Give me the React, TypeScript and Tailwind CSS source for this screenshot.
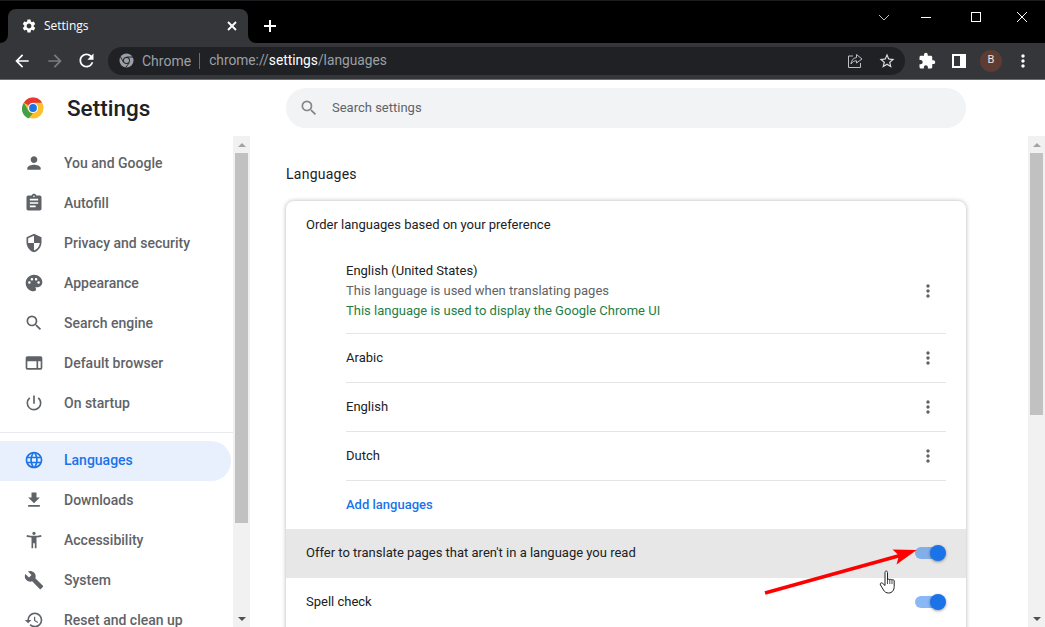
import type { ReactNode } from "react";
import {
	MdAccessibilityNew,
	MdArrowBack,
	MdArrowForward,
	MdAssignment,
	MdBuild,
	MdExtension,
	MdFileDownload,
	MdLanguage,
	MdMoreVert,
	MdOutlineStarBorder,
	MdPalette,
	MdPerson,
	MdPowerSettingsNew,
	MdRefresh,
	MdRestore,
	MdSearch,
	MdSecurity,
	MdSettings,
} from "react-icons/md";

const DefaultBrowserIcon = () => (
	<svg width="20" height="20" viewBox="0 0 24 24" fill="#5f6368">
		<path d="M4 4h16a2 2 0 0 1 2 2v12a2 2 0 0 1-2 2H4a2 2 0 0 1-2-2V6a2 2 0 0 1 2-2zm0 6v8h11v-8H4zm13 0v8h3v-8h-3z" />
	</svg>
);

const ChromeLogo = ({ size = 24 }: { size?: number }) => (
	<svg width={size} height={size} viewBox="0 0 48 48">
		<circle cx="24" cy="24" r="23" fill="#fbc02d" />
		<path d="M24 1a23 23 0 0 1 19.9 11.5H24a11.5 11.5 0 0 0-10 5.7L4.100 12.500A23 23 0 0 1 24 1z" fill="#e53935" />
		<path d="M4.100 12.500 14 29.800a11.500 11.500 0 0 0 10 5.700L14 47A23 23 0 0 1 4.100 12.500z" fill="#43a047" />
		<circle cx="24" cy="24" r="11" fill="#fff" />
		<circle cx="24" cy="24" r="8.500" fill="#1a73e8" />
	</svg>
);

const Toggle = ({ track }: { track: string }) => (
	<div className="relative flex h-4 w-[31px] items-center">
		<div className={`h-3 w-[29px] rounded-full ${track}`} />
		<div className="absolute right-0 top-0 h-4 w-4 rounded-full bg-[#1a73e8] shadow-[0_1px_3px_rgba(0,0,0,0.4)]" />
	</div>
);

const navTop = [
	{ label: "You and Google", icon: <MdPerson size={20} /> },
	{ label: "Autofill", icon: <MdAssignment size={20} /> },
	{ label: "Privacy and security", icon: <MdSecurity size={20} /> },
	{ label: "Appearance", icon: <MdPalette size={20} /> },
	{ label: "Search engine", icon: <MdSearch size={20} /> },
	{ label: "Default browser", icon: <DefaultBrowserIcon /> },
	{ label: "On startup", icon: <MdPowerSettingsNew size={20} /> },
];

const navBottom = [
	{ label: "Downloads", icon: <MdFileDownload size={20} /> },
	{ label: "Accessibility", icon: <MdAccessibilityNew size={20} /> },
	{ label: "System", icon: <MdBuild size={20} /> },
	{ label: "Reset and clean up", icon: <MdRestore size={20} /> },
];

const NavItem = ({ label, icon }: { label: string; icon: ReactNode }) => (
	<div className="flex h-10 shrink-0 items-center pl-[22px] text-sm font-medium text-[#5f6368]">
		<span className="mr-[18px] flex w-6 justify-center">{icon}</span>
		{label}
	</div>
);

const Scrollbar = ({ thumb }: { thumb: string }) => (
	<div className="flex w-[17px] shrink-0 flex-col items-center bg-[#f1f1f1]">
		<div className="flex h-[17px] w-full shrink-0 items-center justify-center">
			<div className="h-0 w-0 border-x-[4px] border-b-[4px] border-x-transparent border-b-[#a3a3a3]" />
		</div>
		<div className={`w-[13px] shrink-0 bg-[#c1c1c1] ${thumb}`} />
		<div className="flex-1" />
		<div className="flex h-[17px] w-full shrink-0 items-center justify-center">
			<div className="h-0 w-0 border-x-[4px] border-t-[4px] border-x-transparent border-t-[#505050]" />
		</div>
	</div>
);

const LangRow = ({ name }: { name: string }) => (
	<div className="flex h-[49px] items-center justify-between border-t border-[#e5e5e5]">
		<span>{name}</span>
		<MdMoreVert size={20} className="mr-[8px] text-[#5f6368]" />
	</div>
);

export default function App() {
	return (
		<div className="relative flex h-[627px] w-[1045px] flex-col overflow-hidden bg-white font-['Roboto',sans-serif] text-[13px] text-[#202124]">
			{/* tab strip */}
			<div className="flex h-[43px] shrink-0 items-end border-t border-[#1c1c1c] bg-black pl-2">
				<div className="relative flex h-[34px] w-[240px] items-center rounded-t-lg bg-[#35363a] pl-[13px] pr-[11px] font-['Open_Sans',sans-serif] text-xs text-white">
					<div className="absolute -left-2 bottom-0 h-2 w-2 bg-[#35363a]">
						<div className="h-2 w-2 rounded-br-lg bg-black" />
					</div>
					<div className="absolute -right-2 bottom-0 h-2 w-2 bg-[#35363a]">
						<div className="h-2 w-2 rounded-bl-lg bg-black" />
					</div>
					<MdSettings size={16} className="mr-[7px]" />
					<span className="flex-1">Settings</span>
					<svg width="10" height="10" viewBox="0 0 10 10" stroke="#fff" strokeWidth="1.800">
						<path d="M1 1l8 8M9 1l-8 8" />
					</svg>
				</div>
				<svg className="mb-[11px] ml-[16px]" width="12" height="12" viewBox="0 0 12 12" stroke="#fff" strokeWidth="2">
					<path d="M6 0v12M0 6h12" />
				</svg>
				<div className="mb-[21px] ml-auto flex items-center">
					<svg className="mr-[31px]" width="12" height="7" viewBox="0 0 12 7" fill="none" stroke="#bdbdbd">
						<path d="M1 1l5 5 5-5" />
					</svg>
					<div className="mr-[40px] h-px w-[10px] bg-white" />
					<div className="mr-[36px] h-[10px] w-[10px] border border-white" />
					<svg className="mr-[18px]" width="10" height="10" viewBox="0 0 10 10" stroke="#fff">
						<path d="M0 0l10 10M10 0L0 10" />
					</svg>
				</div>
			</div>

			{/* toolbar */}
			<div className="flex h-[37px] shrink-0 items-center border-b border-[#6e6e6e] bg-[#35363a] pb-[1px]">
				<div className="flex w-[108px] items-center text-white">
					<MdArrowBack size={20} className="ml-[12px]" />
					<MdArrowForward size={20} className="ml-[13px] text-[#7b7c7f]" />
					<MdRefresh size={21} className="ml-[11px]" />
				</div>
				<div className="flex h-7 w-[797px] items-center rounded-full bg-[#202124] pl-[11px] text-sm text-[#9aa0a6]">
					<svg width="15" height="15" viewBox="0 0 16 16" className="mr-[8px]">
						<circle cx="8" cy="8" r="7.500" fill="#9aa0a6" />
						<circle cx="8" cy="8" r="3.700" fill="#202124" />
						<circle cx="8" cy="8" r="2.700" fill="#9aa0a6" />
						<path d="M8 4.300h7M5 10.200L1.500 4M10.900 10.500L7 15.500" stroke="#202124" strokeWidth="1" />
					</svg>
					<span>Chrome</span>
					<span className="mx-2 h-4 w-px bg-[#6b6c70]" />
					<span className="ml-[1px] text-[13.75px]">
						chrome://<span className="text-white">settings</span>/languages
					</span>
					<svg className="ml-auto" width="16" height="16" viewBox="0 0 16 16" fill="none" stroke="#bdc1c6" strokeWidth="1">
						<path d="M6 3H1.500v11.500h12V10" />
						<path d="M9.500 1.500 15 6l-5.500 4V7.800C7 7.800 5.300 8.800 4 11c.3-3.600 2.200-6 5.500-6.400V1.500z" />
					</svg>
					<MdOutlineStarBorder size={18} className="ml-[15px] mr-[9px] text-[#dadce0]" />
				</div>
				<MdExtension size={18} className="ml-[13px] text-white" />
				<svg className="ml-[16px]" width="14" height="14" viewBox="0 0 14 14" fill="#fff">
					<path d="M0 0h14v14H0zm2 2v10h6V2z" fillRule="evenodd" />
				</svg>
				<div className="ml-[14px] flex h-[22px] w-[22px] items-center justify-center rounded-full bg-[#5d3d33] text-[11px] text-[#f1e3dd]">
					B
				</div>
				<MdMoreVert size={20} className="ml-[11px] text-white" />
			</div>

			{/* settings header */}
			<div className="flex h-[56px] shrink-0 items-center">
				<div className="flex w-[286px] items-center pl-[22px]">
					<ChromeLogo size={22} />
					<span className="ml-[23px] text-[22.500px] font-medium leading-none">Settings</span>
				</div>
				<div className="mb-[1px] flex h-10 w-[680px] items-center rounded-full bg-[#f1f3f4] pl-[13px] text-[#5f6368]">
					<MdSearch size={20} className="mr-[13px] text-[#80868b]" />
					Search settings
				</div>
			</div>

			{/* body */}
			<div className="flex min-h-0 flex-1">
				<div className="flex w-[233px] shrink-0 flex-col overflow-hidden pt-[7px]">
					{navTop.map((item) => (
						<NavItem key={item.label} {...item} />
					))}
					<div className="mt-[9px] h-px w-full shrink-0 bg-[#e8eaed]" />
					<div className="mb-[-1px] mt-2 flex h-10 w-[231px] shrink-0 items-center rounded-r-full bg-[#e8f0fe] pb-[2px] pl-[22px] text-sm font-medium text-[#1a73e8]">
						<span className="mr-[18px] flex w-6 justify-center">
							<MdLanguage size={20} />
						</span>
						Languages
					</div>
					{navBottom.map((item) => (
						<NavItem key={item.label} {...item} />
					))}
				</div>
				<Scrollbar thumb="h-[370px]" />

				<div className="min-w-0 flex-1 overflow-hidden pl-9">
					<div className="w-[680px]">
						<h2 className="flex h-[65px] items-start pt-[30px] text-[14px] leading-4 tracking-[0.25px]">Languages</h2>
						<div className="rounded-t-lg bg-white pb-10 shadow-[0_0_4px_rgba(60,64,67,0.4)]">
							<div className="flex h-12 items-center px-5">Order languages based on your preference</div>
							<div className="pl-[60px] pr-5">
								<div className="flex h-[84px] items-center justify-between">
									<div className="flex flex-col leading-5">
										<span>English (United States)</span>
										<span className="text-[#5f6368]">This language is used when translating pages</span>
										<span className="text-[#1e8045]">This language is used to display the Google Chrome UI</span>
									</div>
									<MdMoreVert size={20} className="mr-[8px] text-[#5f6368]" />
								</div>
								<LangRow name="Arabic" />
								<LangRow name="English" />
								<LangRow name="Dutch" />
								<div className="flex h-[49px] items-center border-t border-[#e5e5e5] font-medium text-[#1a73e8]">
									Add languages
								</div>
							</div>
							<div className="flex h-[49px] items-center justify-between bg-[#e7e7e7] px-5 pb-[1px]">
								Offer to translate pages that aren't in a language you read
								<Toggle track="bg-[#83aee8]" />
							</div>
							<div className="flex h-12 items-center justify-between px-5">
								Spell check
								<Toggle track="bg-[#8ab8f5]" />
							</div>
						</div>
					</div>
				</div>
				<Scrollbar thumb="h-[262px]" />
			</div>

			{/* red annotation arrow */}
			<svg className="absolute left-[760px] top-[540px]" width="160" height="60" viewBox="0 0 160 60">
				<path d="M5 53 L140 15.500" stroke="#ff0000" strokeWidth="3.500" />
				<path d="M156.700 10 L132.500 9.500 L139 15.500 L136.500 24.500 Z" fill="#ff0000" />
			</svg>

			{/* hand cursor */}
			<svg className="absolute left-[879px] top-[570px]" width="20" height="25" viewBox="0 0 20 25">
				<path
					d="M6 2.500c0-2 2.500-2 2.500 0V10c0-1.200 2.200-1.200 2.200 0 0-1 2.200-1 2.200.3 0-.9 2.300-.8 2.300.6v5.600c0 3.500-2 6.500-5.500 6.500-2.500 0-4-1-5.200-3L1.500 15c-1-1.500.8-3 2.300-1.500L6 15.500V2.500z"
					fill="#fff"
					stroke="#222"
					strokeWidth="1"
				/>
				<path d="M8.500 10v4M10.800 10v4M13 10.500V14" stroke="#222" strokeWidth="0.800" />
			</svg>
		</div>
	);
}
